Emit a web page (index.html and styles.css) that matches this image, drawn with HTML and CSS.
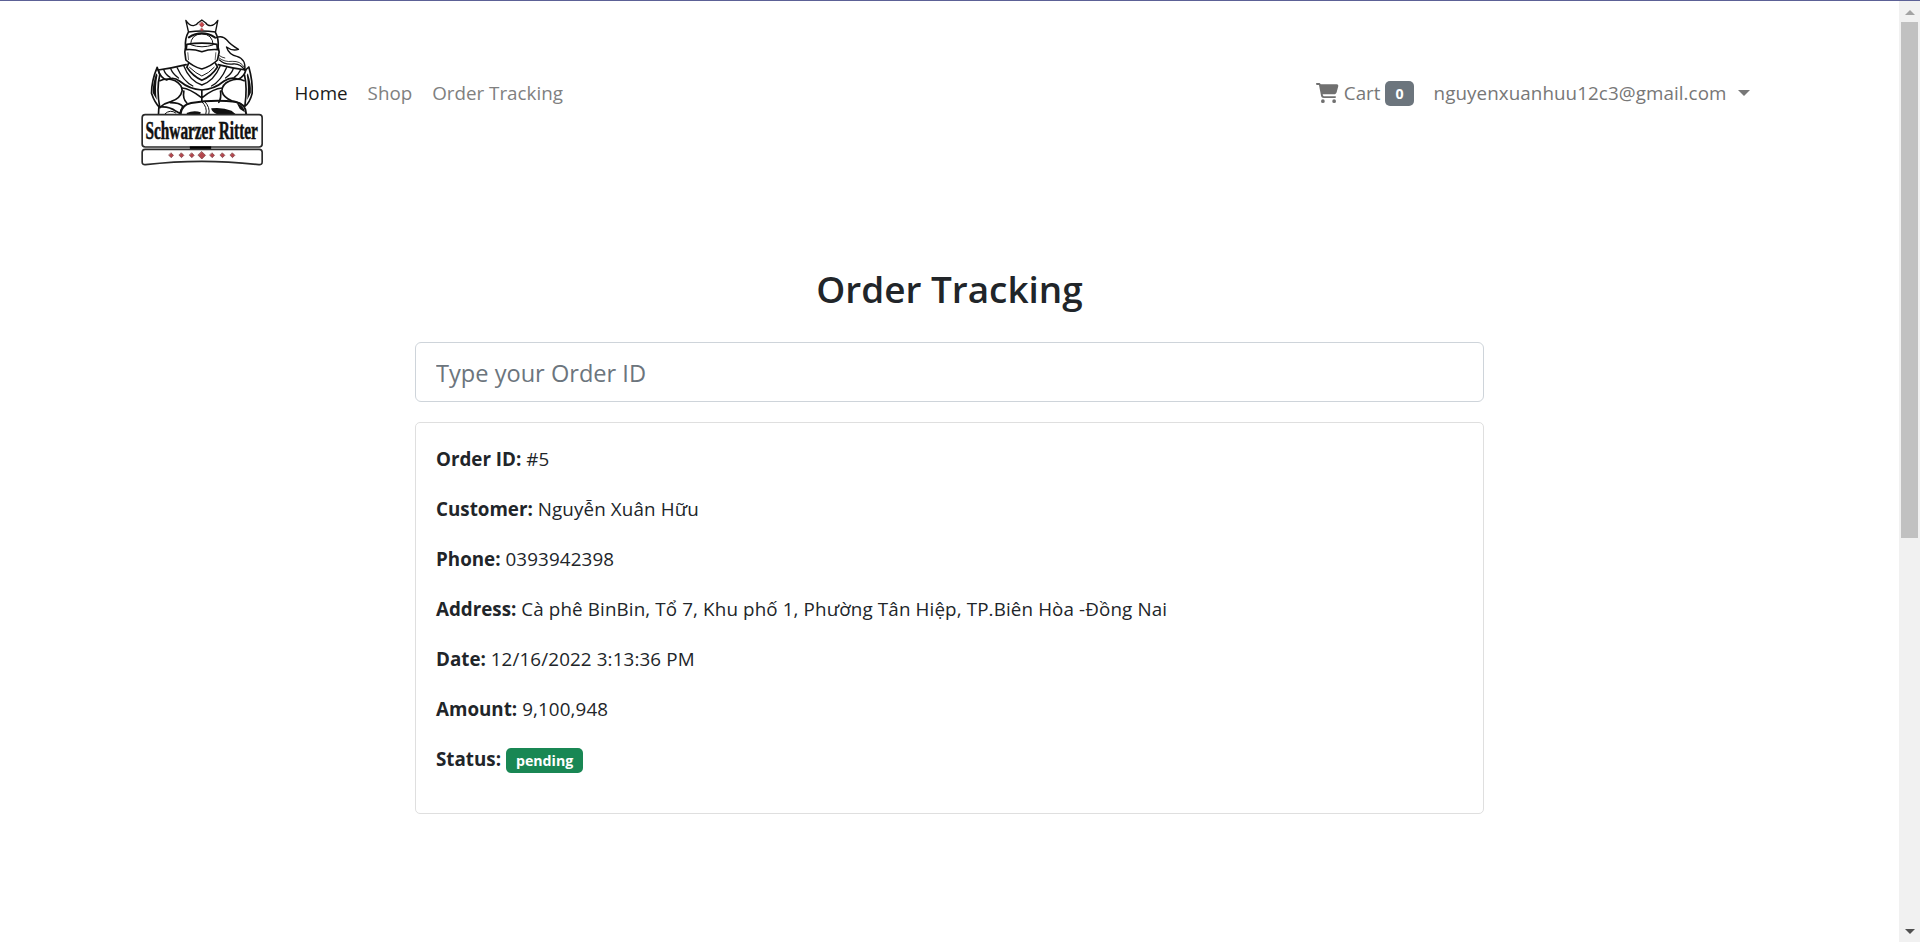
FILE: index.html
```html
<!DOCTYPE html>
<html lang="en">
<head>
<meta charset="utf-8">
<title>Order Tracking</title>
<link rel="stylesheet" href="styles.css">
</head>
<body>
<div class="page">
  <nav class="navbar">
    <a class="brand" href="#">
      <svg class="logo" viewBox="28.5 15 375 468" fill="none" stroke="#111" stroke-width="5" stroke-linejoin="round" stroke-linecap="round">
        <!-- crown -->
        <path d="M177 66 L169 31 Q180 48 192 47 Q202 46 206 38 L217 30 L228 38 Q233 47 243 47 Q255 46 265 31 L258 66 Q217 60 177 66Z" stroke-width="4"/>
        <path d="M217 36l7 8-7 8-7-8zM217 55l4 4-4 4-4-4z" fill="#c9474d" stroke="#8a2c32" stroke-width="2"/>
        <!-- helmet -->
        <path d="M176 68 Q166 85 168 112 L166 126 L169 150 Q190 170 217 177 Q246 168 264 150 L269 126 L266 112 Q268 85 258 68" />
        <path d="M183 104 Q185 72 217 72 Q249 72 251 104" stroke-width="3"/>
        <path d="M178 82 Q217 58 256 82" stroke-width="6"/>
        <path d="M172 103 Q217 96 262 103 L264 119 Q240 117 217 125 Q194 117 170 119Z" stroke-width="5"/>
        <path d="M186 105 Q217 116 250 105" stroke-width="3"/>
        <path d="M175 128 L177 149 M259 128 L257 149" stroke-width="2"/>
        <!-- plume -->
        <path d="M258 84 Q278 74 292 90 Q303 104 327 118 Q308 124 291 111 Q298 134 322 139 Q350 147 346 181 Q333 159 309 162 Q284 164 270 150" stroke-width="4"/>
        <path d="M269 144 Q285 157 308 154 Q333 153 343 170 M268 136 Q278 143 286 144" stroke-width="2.5"/>
        <!-- collar and cape -->
        <path d="M177 160 L172 172 Q190 199 217 211 Q246 199 264 171 L258 160"/>
        <path d="M180 172 Q200 191 217 198 Q238 190 254 172" stroke-width="3"/>
        <path d="M170 164 Q130 174 86 180 Q92 202 111 210 Q131 199 150 213 Q180 238 217 240 Q254 238 284 213 Q306 199 325 208 Q344 201 349 180 Q304 174 266 164"/>
        <path d="M163 168 Q180 212 217 225 Q254 212 272 168 M143 173 Q161 213 190 228 M291 173 Q274 213 246 228 M124 177 Q130 192 147 204 M311 177 Q306 192 288 204 M103 180 Q108 194 122 202 M333 180 Q327 194 314 202" stroke-width="4"/>
        <!-- shoulders -->
        <path d="M83 172 Q66 212 66 250 Q76 280 91 293 Q80 236 91 194Z" stroke-width="5"/>
        <path d="M348 180 L358 171 Q370 214 368 250 Q361 278 346 289 Q354 232 345 195" stroke-width="5"/>
        <path d="M80 190 Q68 226 70 249 L82 270 Q76 231 84 195Z M355 190 Q366 224 364 248 L353 270 Q358 231 352 195Z" fill="#111" stroke="none"/>
        <!-- chest and arms -->
        <path d="M91 212 Q112 202 137 212 Q158 224 158 242 Q153 266 124 275 Q104 280 91 292 M344 212 Q321 203 300 213 Q278 222 277 243 Q282 263 308 273 Q332 278 344 289"/>
        <path d="M158 234 Q180 235 216 263 M217 240 V273 M218 263 Q252 235 278 234 M163 243 Q159 267 172 279 M273 243 Q276 264 268 277"/>
        <path d="M88 293 L87 312 M94 291 Q119 289 140 304 L154 312 M123 278 Q150 278 160 289 L151 311"/>
        <path d="M153 312 Q155 285 185 279 Q250 268 317 275 Q349 281 350 312" stroke-width="6"/>
        <path d="M217 275 Q235 292 229 312 M225 274 Q243 292 238 312 M107 311 Q122 297 139 309" stroke-width="3"/>
        <path d="M245 295 Q279 291 306 302 L319 313 L263 313 Q246 306 245 295Z M171 309 Q194 299 214 307 L212 313 L173 313Z M322 280 Q344 287 346 307 L331 297Z" fill="#111" stroke="none"/>
        <!-- name plate -->
        <rect x="38" y="314" width="360" height="97" rx="9" fill="#fff" stroke="#2b2b2b" stroke-width="5"/>
        <path d="M181 413h64" stroke="#000" stroke-width="8" stroke-linecap="butt"/>
        <path d="M47 418 H389 Q398 418 398 427 V456 Q398 465 388 464 Q300 454 217 454 Q134 454 48 464 Q38 465 38 456 V427 Q38 418 47 418Z" fill="#fff" stroke="#2b2b2b" stroke-width="5"/>
        <text class="logo-text" transform="translate(48 386) scale(1 1.6)" textLength="337">Schwarzer Ritter</text>
        <path d="M125 429l7 7-7 7-7-7zM156 429l7 7-7 7-7-7zM187 429l7 7-7 7-7-7zM217 425l11 11-11 11-11-11zM248 429l7 7-7 7-7-7zM279 429l7 7-7 7-7-7zM309 429l7 7-7 7-7-7z" fill="#b4474d" stroke="#71363a" stroke-width="2"/>
      </svg>
    </a>
    <div class="links">
      <a class="link active" href="#">Home</a>
      <a class="link" href="#">Shop</a>
      <a class="link" href="#">Order Tracking</a>
    </div>
    <div class="links account">
      <a class="link cart" href="#">
        <svg class="cart-icon" viewBox="0 0 576 512" fill="currentColor"><path d="M0 24C0 10.700 10.700 0 24 0h45.500c22 0 41.500 12.800 50.600 32h411c26.300 0 45.500 25 38.600 50.400l-41 152.300c-8.500 31.400-37 53.300-69.500 53.300H170.700l5.400 28.500c2.200 11.300 12.100 19.500 23.600 19.500H488c13.300 0 24 10.700 24 24s-10.700 24-24 24H199.700c-34.600 0-64.300-24.600-70.700-58.500L77.400 54.500C76.700 50.700 73.400 48 69.500 48H24C10.700 48 0 37.300 0 24zM128 464a48 48 0 1 1 96 0 48 48 0 1 1-96 0zm336-48a48 48 0 1 1 0 96 48 48 0 1 1 0-96z"/></svg>
        <span>Cart</span>
        <span class="badge count">0</span>
      </a>
      <a class="link user" href="#"><span class="email">nguyenxuanhuu12c3@gmail.com</span><span class="caret"></span></a>
    </div>
  </nav>
  <main class="tracking">
    <h2 class="title">Order Tracking</h2>
    <input class="order-input" type="text" placeholder="Type your Order ID">
    <div class="card">
      <p class="row"><b>Order ID:</b> <span class="value">#5</span></p>
      <p class="row"><b>Customer:</b> <span class="value">Nguyễn Xuân Hữu</span></p>
      <p class="row"><b>Phone:</b> <span class="value">0393942398</span></p>
      <p class="row"><b>Address:</b> <span class="value">Cà phê BinBin, Tổ 7, Khu phố 1, Phường Tân Hiệp, TP.Biên Hòa -Đồng Nai</span></p>
      <p class="row"><b>Date:</b> <span class="value">12/16/2022 3:13:36 PM</span></p>
      <p class="row"><b>Amount:</b> <span class="value">9,100,948</span></p>
      <p class="row"><b>Status:</b> <span class="badge status">pending</span></p>
    </div>
  </main>
</div>
<div class="scrollbar">
  <span class="arrow up"></span>
  <span class="thumb"></span>
  <span class="arrow down"></span>
</div>
</body>
</html>
```
FILE: styles.css
```css
* { box-sizing: border-box; }
body {
  margin: 0;
  height: 942px;
  display: flex;
  overflow: hidden;
  background: #fff;
  border-top: 1px solid #5c6196;
  color: #212529;
  font: 400 18.8px/30px "Open Sans", "Noto Sans", sans-serif;
}
a { color: inherit; text-decoration: none; }
.page { flex: 1; }
.navbar {
  width: 1622px;
  margin: 0 auto;
  padding-top: 14px;
  display: flex;
  align-items: center;
}
.brand { margin-right: 21px; }
.logo { display: block; width: 125px; height: 156px; }
.logo-text {
  font: 700 46px "Liberation Serif", serif;
  fill: #111;
  stroke: #111;
  stroke-width: 1px;
}
.links { display: flex; color: #808080; }
.account { margin-left: auto; margin-right: 1px; }
.link { padding: 0 10px; display: flex; align-items: center; white-space: nowrap; }
.active { color: #1a1a1a; }
.cart { gap: 5px; color: #777; }
.cart-icon { width: 22.5px; height: 20px; color: #707070; }
.user { color: #777; }
.email { letter-spacing: 0.08px; }
.caret {
  margin-left: 11px;
  border: 6px solid transparent;
  border-top-color: currentColor;
  border-bottom: 0;
}
.badge {
  display: inline-block;
  padding: 5px 10px;
  border-radius: 5px;
  color: #fff;
  font-size: 14.2px;
  font-weight: 700;
  line-height: 15px;
}
.count { background: #6c757d; }
.status { background: #198754; }
.tracking { width: 1069px; margin: 94px auto 0; }
.title {
  margin: 0 0 29px;
  text-align: center;
  font-size: 36.9px;
  font-weight: 600;
  line-height: 48px;
}
.order-input {
  display: block;
  width: 100%;
  height: 60px;
  padding: 1px 20px 0;
  border: 1px solid #ced4da;
  border-radius: 6px;
  font: inherit;
  font-size: 23.6px;
}
.order-input::placeholder { color: #6c757d; opacity: 1; }
.card {
  margin-top: 20px;
  padding: 21px 20px 19px;
  border: 1px solid #dfdfdf;
  border-radius: 5px;
}
.row { margin: 0 0 20px; }
.value { letter-spacing: 0.13px; }
.scrollbar {
  width: 21px;
  background: #f1f1f1;
  display: flex;
  flex-direction: column;
  align-items: center;
}
.arrow { border: 5px solid transparent; }
.up { margin-top: 9px; border-top: 0; border-bottom-color: #a3a3a3; }
.thumb { width: 17px; height: 516px; margin-top: 7px; background: #c1c1c1; }
.down { margin: auto 0 8px; border-bottom: 0; border-top-color: #505050; }
```
